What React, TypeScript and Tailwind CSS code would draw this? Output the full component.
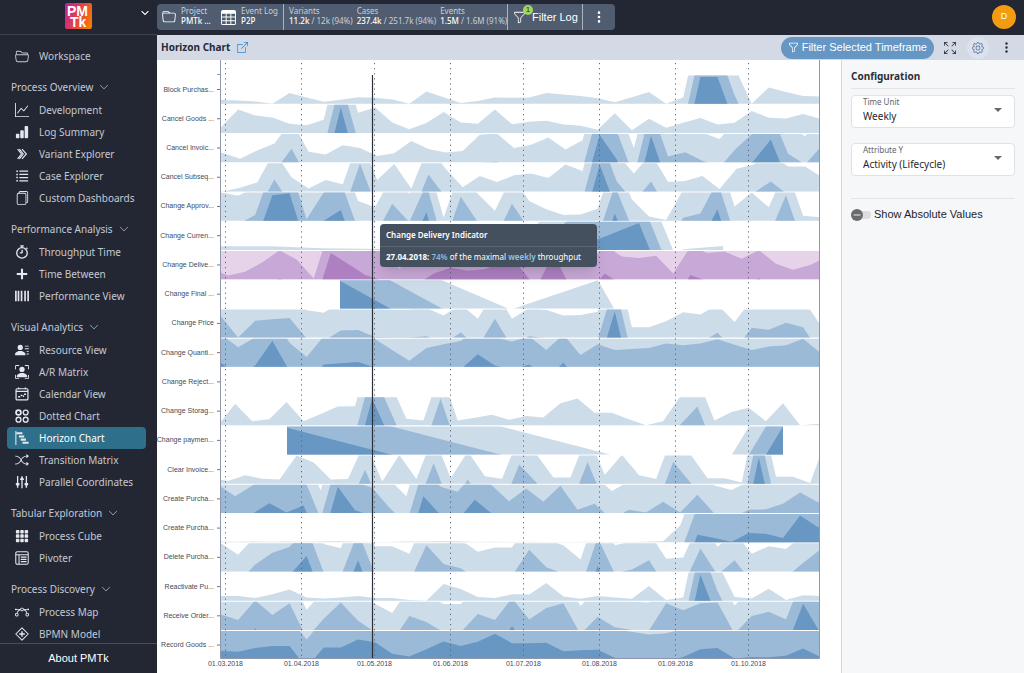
import type { ReactNode } from "react";
import {
  BsArrowsFullscreen,
  BsBarChartFill,
  BsBezier,
  BsBoxArrowUpRight,
  BsChevronDown,
  BsFiles,
  BsFolder,
  BsFolder2Open,
  BsFunnel,
  BsGear,
  BsGraphUp,
  BsGrid3X3GapFill,
  BsPersonBoundingBox,
  BsPersonLinesFill,
  BsShuffle,
  BsTable,
  BsThreeDotsVertical,
} from "react-icons/bs";

function Glyph({ children }: { children: ReactNode }) {
  return (
    <svg width="14" height="14" viewBox="0 0 16 16" fill="none" stroke="currentColor" strokeWidth="1.2">
      {children}
    </svg>
  );
}

const VariantIcon = () => (
  <Glyph>
    <path d="M3 2.5 7.4 8 3 13.5M8 2.5 13 8l-5 5.5M5 2.5 9.4 8 5 13.5" strokeWidth="1.3" />
  </Glyph>
);

const ListIcon = () => (
  <Glyph>
    <path d="M5 2.5h10M5 6.2h10M5 9.8h10M5 13.5h10" strokeWidth="1.4" />
    <path d="M1.5 2.5h1.8M1.5 6.2h1.8M1.5 9.8h1.8M1.5 13.5h1.8" strokeWidth="1.8" />
  </Glyph>
);

const TimerIcon = () => (
  <Glyph>
    <circle cx="8" cy="9" r="6" strokeWidth="1.5" />
    <path d="M6 1h4M8 1v2M13 3.2l1.2 1.2M8.2 9V5.5M8.2 9H5.5" strokeWidth="1.5" />
  </Glyph>
);

const BetweenIcon = () => (
  <Glyph>
    <path d="M2 8h12" strokeWidth="2.4" />
    <path d="M8 2v12" strokeWidth="2.4" />
  </Glyph>
);

const BarcodeIcon = () => (
  <Glyph>
    <path d="M1 2v12M4 2v12M7.5 2v12M11.5 2v12M15 2v12" strokeWidth="1.9" />
  </Glyph>
);

const CalendarIcon = () => (
  <Glyph>
    <rect x="1.2" y="2" width="13.6" height="12.8" rx="1.4" strokeWidth="1.4" />
    <path d="M1.2 5h13.6M4.2.5v2M11.8.5v2" strokeWidth="1.4" />
    <path d="M3.6 11.2h2.2M6.4 9.8h2.2M9.2 10.4h1.2M10.4 8.2h2.2" strokeWidth="1.8" />
  </Glyph>
);

const DotsIcon = () => (
  <Glyph>
    <circle cx="4" cy="4" r="2.8" strokeWidth="2" />
    <circle cx="12.2" cy="4" r="2.8" strokeWidth="1.5" />
    <circle cx="4" cy="12.2" r="2.8" strokeWidth="1.5" />
    <circle cx="12.2" cy="12.2" r="2.8" strokeWidth="1.5" />
  </Glyph>
);

const StepsIcon = () => (
  <Glyph>
    <path d="M1 0v16" strokeWidth="1.2" />
    <path d="M1.5 2.6h7M4.5 6.2h6M6.5 9.8h6M8.5 13.4h7" strokeWidth="2.4" />
  </Glyph>
);

const ParallelIcon = () => (
  <Glyph>
    <path d="M3 1v13.5M8 1.5v13.5M13 1v13.5M1 10h4M11 10h4M6 5h4" strokeWidth="1.5" />
    <path d="M1.2 10.2 3 12.4l1.8-2.2M6.2 5.2 8 3l1.8 2.2M11.2 10.2l1.8 2.2 1.8-2.2" />
  </Glyph>
);

const PivotIcon = () => (
  <Glyph>
    <rect x=".9" y=".9" width="14.2" height="14.2" rx="1.6" />
    <path d="M1 4.2h14M4.6 4.2V15" />
    <path d="M6.6 7h6.6M6.6 9.6h6.6M6.6 12.2h6.6" strokeWidth="1.4" />
  </Glyph>
);

const BpmnIcon = () => (
  <Glyph>
    <path d="M8 .9 15.1 8 8 15.1.9 8z" strokeLinejoin="round" />
    <path d="M8 4.8v6.4M4.8 8h6.4" strokeWidth="1.6" />
  </Glyph>
);

const sections = [
  {
    title: "Process Overview",
    items: [
      { label: "Development", icon: <BsGraphUp /> },
      { label: "Log Summary", icon: <BsBarChartFill /> },
      { label: "Variant Explorer", icon: <VariantIcon /> },
      { label: "Case Explorer", icon: <ListIcon /> },
      { label: "Custom Dashboards", icon: <BsFiles /> },
    ],
  },
  {
    title: "Performance Analysis",
    items: [
      { label: "Throughput Time", icon: <TimerIcon /> },
      { label: "Time Between", icon: <BetweenIcon /> },
      { label: "Performance View", icon: <BarcodeIcon /> },
    ],
  },
  {
    title: "Visual Analytics",
    items: [
      { label: "Resource View", icon: <BsPersonLinesFill /> },
      { label: "A/R Matrix", icon: <BsPersonBoundingBox /> },
      { label: "Calendar View", icon: <CalendarIcon /> },
      { label: "Dotted Chart", icon: <DotsIcon /> },
      { label: "Horizon Chart", icon: <StepsIcon />, active: true },
      { label: "Transition Matrix", icon: <BsShuffle /> },
      { label: "Parallel Coordinates", icon: <ParallelIcon /> },
    ],
  },
  {
    title: "Tabular Exploration",
    items: [
      { label: "Process Cube", icon: <BsGrid3X3GapFill /> },
      { label: "Pivoter", icon: <PivotIcon /> },
    ],
  },
  {
    title: "Process Discovery",
    items: [
      { label: "Process Map", icon: <BsBezier /> },
      { label: "BPMN Model", icon: <BpmnIcon /> },
    ],
  },
];

interface Series {
  label: string;
  // weekly values, in units of one band
  weekly?: number[];
  offset?: number;
  // separate runs of [x, value] for activities with gaps
  runs?: [number, number][][];
  selected?: boolean;
}

const series: Series[] = [
  { label: "Block Purchas...", weekly: [0.13, 0.11, 0.08, 0, 0.38, 0.22, 0.07, 0.14, 0.23, 0.21, 0.15, 0, 0.43, 0.23, 0.02, 0.1, 0.22, 0.21, 0.22, 0.38, 0.33, 0.27, 0.19, 0.05, 0.23, 0.41, 0, 0.22, 2.95, 2.95, 1.3, 0, 0.57, 0.42, 0.27, 0.25] },
  { label: "Cancel Goods ...", weekly: [0.2, 0.83, 0.62, 0.55, 0.33, 0.27, 0.47, 2.9, 0.72, 0.9, 0.37, 0.13, 0.35, 0.74, 0.37, 0.33, 0.83, 0.31, 0.4, 0.43, 0.3, 0.26, 0.11, 0.7, 0.1, 0.5, 0.18, 0.36, 0.53, 0.3, 0.36, 0.78, 0.54, 0.51, 0.67, 0.5] },
  { label: "Cancel Invoic...", offset: 2, weekly: [0.33, 0.12, 0.42, 0.66, 1.48, 0.37, 0.27, 0.6, 0.5, 0.22, 0.32, 0.75, 0.47, 0.34, 0.4, 0.97, 1.02, 0.5, 0.62, 0.88, 0.45, 0.78, 2.97, 2.1, 0.5, 2.93, 1.2, 1.35, 1.05, 0.82, 1.5, 2.05, 2.8, 1.3, 0.92, 1.6] },
  { label: "Cancel Subseq...", offset: 2, weekly: [0, 0.13, 0.32, 1.42, 0.5, 0.1, 0.4, 0.25, 1.98, 0.4, 0.97, 0.1, 1.6, 0.8, 0.15, 0.55, 0.33, 0.57, 0.63, 0.48, 0.95, 0.72, 2.95, 1.35, 0.63, 1.35, 0.33, 0.37, 0.55, 0.08, 0.8, 0.95, 1.35, 0.88, 0.88, 0.5] },
  { label: "Change Approv...", weekly: [1, 0.88, 1.2, 2.9, 2.97, 1.05, 2, 2.38, 0.7, 0.47, 1.6, 0.95, 2.3, 0.1, 1.85, 0.95, 0.35, 1.6, 0.7, 0.4, 0.2, 0.22, 0.42, 2.25, 0.75, 0.15, 0.02, 1.1, 1.25, 2.4, 0.5, 1, 0.47, 1.9, 0.17, 0.12] },
  {
    label: "Change Curren...",
    runs: [
      [[0, 0.13], [50, 0.13], [100, 0.06], [240, 0], [300, 0.3], [345, 2], [379, 2.4], [418, 2.95], [452, 0]],
      [[462, 0.02], [502, 0.14]],
    ],
  },
  { label: "Change Delive...", selected: true, offset: -10, weekly: [1.35, 1.13, 1.26, 1.6, 2.02, 1.7, 1.02, 2.93, 2.55, 2.15, 1.95, 1.38, 1.8, 2.2, 2.4, 2.3, 2.35, 2.6, 2.45, 1.7, 2.9, 1.7, 1.5, 2.2, 1.8, 1.75, 1.83, 1.2, 2.15, 1.93, 1.98, 1.72, 2.03, 1.55, 1.33, 1.5, 1.8] },
  {
    label: "Change Final ...",
    runs: [
      [[119, 2.98], [169, 2], [221, 1], [287, 0]],
      [[293, 0], [377, 1], [393, 0]],
    ],
  },
  { label: "Change Price", weekly: [1.75, 1, 1.6, 1.65, 1.7, 0.97, 0.88, 1.25, 1.27, 1.02, 1, 1, 1.05, 0.78, 1.18, 0.67, 1.67, 0.67, 1.05, 0.98, 0.78, 0.8, 0.92, 2.93, 0.37, 0.37, 0.58, 0.9, 0.82, 1.17, 0.55, 1.35, 1.28, 1.53, 1.37, 0.45] },
  { label: "Change Quanti...", weekly: [2.15, 1.7, 2.05, 2.93, 1.85, 1.35, 2.08, 2.13, 2.17, 1.98, 1.6, 1.22, 1.67, 1.8, 1.92, 2.45, 2.05, 1.9, 2.08, 1.6, 2.15, 1.42, 1.8, 1.6, 1.63, 1.67, 1.83, 1.77, 1.83, 1.98, 1.78, 1.6, 1.72, 1.77, 2, 1.5] },
  { label: "Change Reject...", runs: [] },
  { label: "Change Storag...", offset: -3, weekly: [0, 0.77, 0.15, 0.22, 0.83, 0.15, 0.4, 0.67, 0.68, 2.95, 1.6, 0.23, 0.17, 1.95, 0.17, 0.27, 0.38, 0.2, 0.33, 0.28, 0.78, 0.95, 0.45, 0.45, 0.22, 0, 0.15, 1.02, 1.67, 0.17, 0.47, 0.62, 0.15, 0.78, 0, 0.05, 0.05] },
  {
    label: "Change paymen...",
    runs: [
      [[66, 2.95], [389, 0]],
      [[511, 0], [562, 3]],
    ],
  },
  { label: "Clear Invoice...", offset: -10, weekly: [0.2, 0.1, 0.3, 0.18, 0.15, 1, 0.75, 0.15, 0.17, 1.5, 0.08, 1.02, 0.17, 1.73, 0.2, 1.15, 0.27, 0.18, 1.68, 1.05, 0.22, 0.22, 1.77, 0.32, 1.03, 0.3, 0.17, 1.78, 1.05, 0.2, 0.2, 0.05, 2.93, 0.25, 0.25, 0.03, 1.7] },
  { label: "Create Purcha...", offset: -3, weekly: [2, 1.6, 1.97, 2.35, 2.02, 2.27, 0.8, 2.93, 2.1, 1.9, 1.2, 0.6, 2.6, 1.93, 1.75, 2.47, 1.98, 1.42, 1.87, 1.4, 1.97, 1.12, 1.33, 0.78, 1.12, 1.02, 1.4, 1.02, 1.65, 0.98, 0.82, 1.12, 1.13, 1.33, 1.73, 1.4, 1.3] },
  { label: "Create Purcha...", offset: -3, weekly: [0.02, 0.02, 0.03, 0.02, 0.03, 0.02, 0.03, 0.04, 0.02, 0.01, 0.01, 0.03, 0.03, 0.04, 0.04, 0.01, 0.02, 0.01, 0.02, 0.01, 0.01, 0.01, 0.02, 0.01, 0.01, 0.02, 0.04, 0.6, 2.27, 2.15, 2.02, 2.33, 2.3, 2.15, 2.95, 2.55, 2.4] },
  { label: "Delete Purcha...", weekly: [1, 0.6, 1.25, 1.67, 1.87, 2.55, 0.98, 0.83, 2.4, 0.9, 0.9, 0.63, 1.93, 1.27, 1.12, 0.7, 0.85, 0.85, 1.77, 1.15, 0.93, 0.43, 2.2, 0.93, 1.07, 1.4, 0.45, 0.5, 1.82, 0.88, 1.4, 0.63, 0.9, 0.8, 1.3, 1.78] },
  { label: "Reactivate Pu...", weekly: [0.17, 0.17, 0.1, 0.23, 0.4, 0.12, 0.08, 0.12, 0.17, 0.1, 0.1, 0.03, 0, 0.6, 0.42, 0.13, 0.1, 0.23, 0.22, 0.63, 0.15, 0.07, 0.17, 0.12, 0.07, 0.53, 0.03, 0.12, 2.93, 1.35, 0.13, 0.08, 0.43, 0.03, 0.2, 0.17] },
  { label: "Receive Order...", weekly: [1.55, 1.35, 2.05, 1.53, 1.95, 0.72, 1.4, 1.98, 1.33, 0.93, 0.6, 1.5, 1.28, 0.92, 0.92, 1.57, 1.35, 2.13, 1.37, 1.78, 1.95, 0.85, 1.47, 1.1, 1, 0.98, 1.95, 1.7, 1.95, 1.97, 0.87, 1.5, 1.65, 1.37, 2.93, 1.9] },
  { label: "Record Goods ...", weekly: [2.3, 2.27, 2.4, 2.47, 2.47, 1.7, 2.42, 2.42, 2.7, 2.6, 2.2, 2.1, 2.35, 2.63, 2.47, 2.62, 2.9, 2.57, 2.57, 2.58, 2.28, 2.32, 2.34, 2.05, 1.97, 1.88, 1.92, 2.08, 2.35, 2.4, 2.03, 2.08, 2.07, 2.12, 2.38, 2.08] },
];

const months = [
  { x: 68.5, label: "01.03.2018" },
  { x: 144.5, label: "01.04.2018" },
  { x: 217.5, label: "01.05.2018" },
  { x: 293.5, label: "01.06.2018" },
  { x: 366.5, label: "01.07.2018" },
  { x: 442.5, label: "01.08.2018" },
  { x: 518.5, label: "01.09.2018" },
  { x: 591.5, label: "01.10.2018" },
];

const LEFT = 64;
const WIDTH = 599;
const TOP = 15.5;
const STEP = 29.24;
const BAND = 28.2;
const WEEK = 17.12;
const BLUES = ["#cddce9", "#9bbad8", "#6897c3"];
const PURPLES = ["#e6d3ea", "#c8a8d6", "#ae80c2"];

function toRuns(row: Series): [number, number][][] {
  if (row.runs) return row.runs;
  const offset = row.offset ?? 0;
  const points = (row.weekly ?? []).map((v, i): [number, number] => [offset + i * WEEK, v]);
  if (offset > 0) points.unshift([0, points[0][1]]);
  return [points];
}

function areaPath(points: [number, number][], band: number) {
  const first = points[0][0];
  const last = points[points.length - 1][0];
  const line = points.map(([x, v]) => `L${x.toFixed(1)} ${((band + 1 - v) * BAND).toFixed(1)}`).join("");
  const floor = 4 * BAND;
  return `M${first} ${floor}${line}L${last.toFixed(1)} ${floor}Z`;
}

function HorizonChart() {
  return (
    <svg viewBox="0 0 684 613" className="block h-auto w-full" fontFamily="Liberation Sans, Arial, sans-serif" fontSize="7" fill="#434a5c">
      {series.map((row, i) => {
        const y = TOP + i * STEP;
        const colors = row.selected ? PURPLES : BLUES;
        return (
          <g key={i}>
            <svg x={LEFT} y={y} width={WIDTH} height={i === series.length - 1 ? 27 : BAND} overflow="hidden">
              {toRuns(row).map((points, r) =>
                colors.map((color, band) => <path key={`${r}-${color}`} d={areaPath(points, band)} fill={color} />)
              )}
            </svg>
            <path d={`M60 ${y + 14}h4`} stroke="#6e7591" />
            <text x="57" y={y + 16} textAnchor="end">
              {row.label}
            </text>
          </g>
        );
      })}
      {months.map((m) => (
        <g key={m.label}>
          <path d={`M${m.x} 3V598`} stroke="#5c6474" strokeWidth="1" strokeDasharray="1.2 3.9" />
          <text x={m.x} y="606" textAnchor="middle">
            {m.label}
          </text>
        </g>
      ))}
      <path d="M60 14.5h4M63.5 0V598.5H662.5V0" fill="none" stroke="#9096ac" />
      <path d="M215.5 15V598" stroke="#2b2f38" strokeWidth="1.2" />
    </svg>
  );
}

function Sidebar() {
  return (
    <aside className="flex w-[157px] shrink-0 flex-col bg-[#232733] text-[#c3c9d3]">
      <div className="flex h-[35px] shrink-0 items-center border-b border-[#3c4252]">
        <div className="w-16" />
        <svg width="28" height="28" viewBox="0 0 28 28" aria-label="PMTk">
          <defs>
            <linearGradient id="logo" x1="0" y1="0.3" x2="1" y2="0.7">
              <stop offset="0" stopColor="#c3209c" />
              <stop offset="0.5" stopColor="#e8433f" />
              <stop offset="1" stopColor="#f57c00" />
            </linearGradient>
          </defs>
          <rect x="1" y="0" width="27" height="26" rx="2" fill="url(#logo)" />
          <g fill="#fff" fontFamily="Liberation Sans, Arial, sans-serif" fontWeight="bold" fontSize="14">
            <text x="3" y="13">PM</text>
            <text x="6" y="24">Tk</text>
          </g>
        </svg>
        <button type="button" aria-label="Collapse menu" className="ml-auto mr-2 -mt-2 text-[8px] text-white">
          <BsChevronDown size={8} strokeWidth={1.5} />
        </button>
      </div>
      <nav className="min-h-0 flex-1 overflow-hidden pt-[10px] font-['Noto_Sans',sans-serif] text-[10px]">
        <a href="#workspace" className="flex h-[22px] items-center gap-[10px] pl-[15px]">
          <BsFolder2Open size={14} />
          Workspace
        </a>
        {sections.map((section) => (
          <div key={section.title} className="mt-2">
            <button type="button" className="flex h-6 items-center gap-[6px] pl-[11px]">
              {section.title}
              <BsChevronDown size={10} />
            </button>
            {section.items.map((item) => (
              <a
                key={item.label}
                href="#view"
                className={`ml-[7px] mr-[11px] flex h-[22px] items-center gap-[10px] whitespace-nowrap rounded pl-2 ${
                  "active" in item ? "bg-[#2e6f8b] text-white" : ""
                }`}
              >
                <span className="w-[14px] text-[14px] text-[#e4e8ee]">{item.icon}</span>
                {item.label}
              </a>
            ))}
          </div>
        ))}
      </nav>
      <button type="button" className="h-[30px] shrink-0 border-t border-[#4a4f5c] text-[11px] text-white">
        About PMTk
      </button>
    </aside>
  );
}

function Stat({ label, value, total }: { label: string; value: string; total?: string }) {
  return (
    <div className="whitespace-nowrap pb-[3px] leading-[10px]">
      <p className="text-[#c9d0da]">{label}</p>
      <p className="text-[#c9d0da]">
        <span className="font-medium text-white">{value}</span>
        {total}
      </p>
    </div>
  );
}

function TopBar() {
  return (
    <header className="flex h-[35px] shrink-0 items-center justify-between bg-[#232733] pb-px pr-2">
      <div className="flex h-[26px] divide-x divide-[#aab3c0] rounded bg-[#505d70] font-['Noto_Sans',sans-serif] text-[8px]">
        <div className="flex w-[127px] items-center pl-[5px]">
          <BsFolder size={14} className="text-white" />
          <div className="ml-[5px] w-10">
            <Stat label="Project" value="PMTk ..." />
          </div>
          <BsTable size={15} className="text-white" />
          <div className="ml-[5px]">
            <Stat label="Event Log" value="P2P" />
          </div>
        </div>
        <div className="flex w-56 items-center gap-1 pl-[5px]">
          <Stat label="Variants" value="11.2k" total=" / 12k (94%)" />
          <Stat label="Cases" value="237.4k" total=" / 251.7k (94%)" />
          <Stat label="Events" value="1.5M" total=" / 1.6M (91%)" />
        </div>
        <button type="button" className="relative flex w-[75px] items-center gap-[6px] pl-[5px] font-['Liberation_Sans',sans-serif] text-[11px] text-white">
          <BsFunnel size={13} />
          <span className="absolute left-[15px] top-px size-[10px] rounded-full bg-[#a3d65c] text-center text-[8px] leading-[10px] text-[#232733]">
            1
          </span>
          Filter Log
        </button>
        <button type="button" aria-label="More" className="flex w-8 items-center justify-center text-white">
          <BsThreeDotsVertical size={14} />
        </button>
      </div>
      <button type="button" className="size-6 rounded-full bg-[#f39c12] text-[9px] text-white">
        D
      </button>
    </header>
  );
}

function SelectField({ id, label, value }: { id: string; label: string; value: string }) {
  return (
    <div className="flex h-[33px] items-center rounded-sm border border-[#dfe2e6] bg-white pb-1 pl-[11px] pr-3">
      <div className="min-w-0 flex-1">
        <label htmlFor={id} className="block text-[8px] leading-3 text-[#61656c]">
          {label}
        </label>
        <select id={id} defaultValue={value} className="block w-full appearance-none text-[10px] leading-4 text-[#25292f]">
          <option>{value}</option>
        </select>
      </div>
      <svg width="8" height="4" viewBox="0 0 8 4" fill="#666b72">
        <path d="M0 0h8L4 4z" />
      </svg>
    </div>
  );
}

function ConfigPanel() {
  return (
    <section className="w-[183px] shrink-0 border-l border-[#d3d6dc] bg-[#f6f7f9] px-[9px] font-['Noto_Sans',sans-serif]">
      <h2 className="h-[29px] border-b border-[#e2e4e8] pt-2 text-[10px] font-bold leading-4 text-[#2a2f38]">Configuration</h2>
      <div className="mt-[6px] flex flex-col gap-[15px]">
        <SelectField id="time-unit" label="Time Unit" value="Weekly" />
        <SelectField id="attribute-y" label="Attribute Y" value="Activity (Lifecycle)" />
      </div>
      <label className="mt-[22px] flex h-8 items-center gap-[3px] border-t border-[#e2e4e8] font-['Liberation_Sans',sans-serif] text-[11px] text-[#1f2328]">
        <input type="checkbox" className="peer sr-only" />
        <span className="flex h-2 w-5 items-center rounded-full bg-[#dcdddf]">
          <svg width="12" height="12" viewBox="0 0 12 12" className="shrink-0">
            <circle cx="6" cy="6" r="6" fill="#6b6b6b" />
            <path d="M2.5 6h7" stroke="#d5d5d5" strokeWidth="1.2" />
          </svg>
        </span>
        Show Absolute Values
      </label>
    </section>
  );
}

export default function App() {
  return (
    <div className="flex h-screen overflow-hidden bg-white font-['Liberation_Sans',sans-serif]">
      <Sidebar />
      <div className="flex min-w-0 flex-1 flex-col">
        <TopBar />
        <div className="flex h-[25px] shrink-0 items-center bg-[#d3dae6] pl-1 text-[#242a35]">
          <h1 className="font-['Noto_Sans',sans-serif] text-[10px] font-bold">Horizon Chart</h1>
          <a href="#open" aria-label="Open in new tab" className="ml-[7px] text-[#2f86dd]">
            <BsBoxArrowUpRight size={11} />
          </a>
          <div className="ml-auto flex items-center pr-[11px]">
            <button type="button" className="flex h-[22px] items-center gap-[3px] whitespace-nowrap rounded-full bg-[#6697c4] px-[7px] text-[11px] text-white">
              <BsFunnel size={11} />
              Filter Selected Timeframe
            </button>
            <button type="button" aria-label="Full screen" className="ml-[10px]">
              <BsArrowsFullscreen size={12} />
            </button>
            <button type="button" aria-label="Settings" className="ml-[11px] flex size-[22px] items-center justify-center rounded-full bg-[#dce2ed] text-[#4f6b99]">
              <BsGear size={12} />
            </button>
            <button type="button" aria-label="More options" className="ml-[11px]">
              <BsThreeDotsVertical size={13} />
            </button>
          </div>
        </div>
        <main className="flex min-h-0 flex-1">
          <div className="relative min-w-0 flex-1">
            <HorizonChart />
            <div
              role="tooltip"
              className="absolute left-[223px] top-[164px] min-w-[217px] whitespace-nowrap rounded bg-[#44505e] font-['Noto_Sans',sans-serif] text-[8px] text-white shadow-lg"
            >
              <p className="border-b border-[#5c6673] px-[6px] py-1 font-semibold leading-[14px]">Change Delivery Indicator</p>
              <p className="px-[6px] py-1 leading-3">
                <b>27.04.2018:</b> <span className="font-semibold text-[#8bb8dc]">74%</span> of the maximal{" "}
                <span className="font-semibold text-[#8fc7ea]">weekly</span> throughput
              </p>
            </div>
          </div>
          <ConfigPanel />
        </main>
      </div>
    </div>
  );
}
